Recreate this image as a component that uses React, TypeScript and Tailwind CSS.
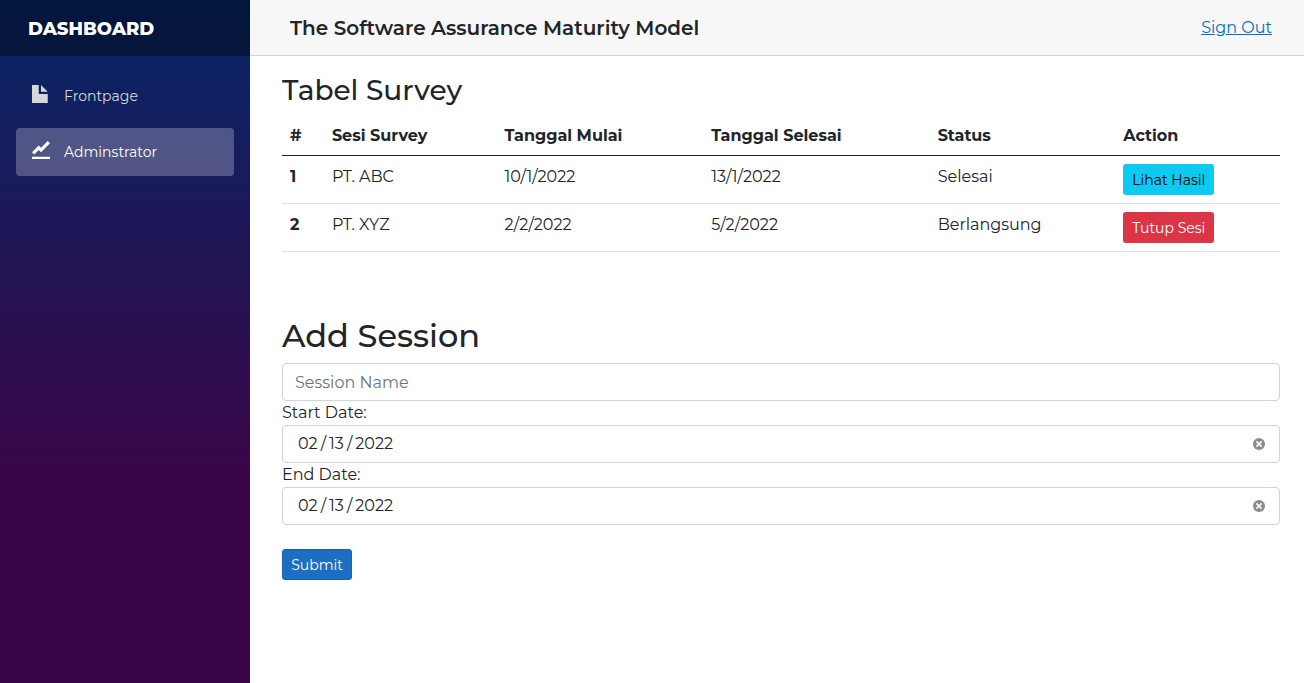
import { useState } from "react";

type Session = {
  id: number;
  name: string;
  start: string;
  end: string;
  status: string;
  action: string;
  tone: string;
};

const sessions: Session[] = [
  { id: 1, name: "PT. ABC", start: "10/1/2022", end: "13/1/2022", status: "Selesai", action: "Lihat Hasil", tone: "bg-[#0dcaf0] text-black" },
  { id: 2, name: "PT. XYZ", start: "2/2/2022", end: "5/2/2022", status: "Berlangsung", action: "Tutup Sesi", tone: "bg-[#dc3545] text-white" },
];

const columns = [
  { label: "#", width: "w-[4.2%]" },
  { label: "Sesi Survey", width: "w-[17.3%]" },
  { label: "Tanggal Mulai", width: "w-[20.7%]" },
  { label: "Tanggal Selesai", width: "w-[22.7%]" },
  { label: "Status", width: "w-[18.6%]" },
  { label: "Action", width: "w-[16.5%]" },
];

const headCell = "border-b border-[#212529] px-2 pt-[9px] pb-[7px] font-bold";
const bodyCell = "border-b border-[#dee2e6] px-2 pt-[9px] pb-[7px]";

const documentPath = "M0 0v8h7v-4h-4v-4h-3zm4 0v3h3l-3-3z";
const graphPath =
  "M7.03 0l-3.03 3-1-1-3 3.03 1 1 2-2.03 1 1 4-4-.97-1zm-7.03 7v1h8v-1h-8z";

function NavItem({ label, path, active }: { label: string; path: string; active?: boolean }) {
  return (
    <li>
      <a
        href="#"
        aria-current={active ? "page" : undefined}
        className={
          active
            ? "flex h-12 items-center gap-[14px] rounded bg-white/25 px-4 text-sm text-white"
            : "flex h-12 items-center gap-[14px] rounded px-4 text-sm text-[#d7d7d7]"
        }
      >
        <svg viewBox="0 0 8 8" className="mb-1 size-[18px]" fill="currentColor" aria-hidden="true">
          <path d={path} />
        </svg>
        {label}
      </a>
    </li>
  );
}

function DateField({ id, label }: { id: string; label: string }) {
  const [value, setValue] = useState("2022-02-13");
  return (
    <div>
      <label htmlFor={id} className="block leading-6">
        {label}
      </label>
      <div className="flex h-[38px] items-center rounded border border-[#ced4da] bg-white px-[14px]">
        <input
          id={id}
          type="date"
          value={value}
          onChange={(e) => setValue(e.target.value)}
          className="min-w-0 flex-1 bg-transparent outline-none [&::-webkit-calendar-picker-indicator]:hidden [&::-webkit-datetime-edit-text]:px-[2px]"
        />
        <button type="button" aria-label={`Clear ${label}`} onClick={() => setValue("")}>
          <svg viewBox="0 0 12 12" className="size-3" aria-hidden="true">
            <circle cx="6" cy="6" r="6" fill="#8c8c8c" />
            <path d="M3.4 3.4l5.2 5.2M8.6 3.4l-5.2 5.2" stroke="#fff" strokeWidth="1.5" />
          </svg>
        </button>
      </div>
    </div>
  );
}

export default function App() {
  return (
    <div className="flex min-h-screen bg-white font-[Montserrat,Inter,sans-serif] text-base text-[#212529]">
      <aside className="w-[250px] shrink-0 bg-[linear-gradient(180deg,rgb(5,39,103)_0%,#3a0647_70%)]">
        <div className="flex h-14 items-center bg-black/40 px-7 pt-[2px]">
          <a href="#" className="text-lg font-extrabold text-white">
            DASHBOARD
          </a>
        </div>
        <nav className="px-4 pt-4">
          <ul className="flex flex-col gap-2">
            <NavItem label="Frontpage" path={documentPath} />
            <NavItem label="Adminstrator" path={graphPath} active />
          </ul>
        </nav>
      </aside>

      <main className="min-w-0 flex-1">
        <header className="flex h-14 items-center justify-between border-b border-[#d6d5d5] bg-[#f7f7f7] pr-8 pl-10">
          <h1 className="text-xl font-semibold">The Software Assurance Maturity Model</h1>
          <a href="#" className="text-[#0071c1] underline">
            Sign Out
          </a>
        </header>

        <div className="pt-[17px] pr-6 pl-8">
          <h2 className="mb-2 text-[28px] leading-[34px] font-medium">Tabel Survey</h2>
          <table className="w-full table-fixed border-separate border-spacing-0 text-left">
            <thead>
              <tr>
                {columns.map((c) => (
                  <th key={c.label} scope="col" className={`${c.width} ${headCell}`}>
                    {c.label}
                  </th>
                ))}
              </tr>
            </thead>
            <tbody className="align-top">
              {sessions.map((s) => (
                <tr key={s.id}>
                  <th scope="row" className={`${bodyCell} font-bold`}>
                    {s.id}
                  </th>
                  <td className={bodyCell}>{s.name}</td>
                  <td className={bodyCell}>{s.start}</td>
                  <td className={bodyCell}>{s.end}</td>
                  <td className={bodyCell}>{s.status}</td>
                  <td className="border-b border-[#dee2e6] p-2">
                    <button type="button" className={`block h-[31px] w-[91px] rounded-[3px] text-sm ${s.tone}`}>
                      {s.action}
                    </button>
                  </td>
                </tr>
              ))}
            </tbody>
          </table>

          <form className="mt-16" onSubmit={(e) => e.preventDefault()}>
            <h2 className="mb-2 text-[32px] leading-[39px] font-medium">Add Session</h2>
            <input
              type="text"
              aria-label="Session Name"
              placeholder="Session Name"
              className="block h-[38px] w-full rounded border border-[#ced4da] bg-white px-3 outline-none placeholder:text-[#6c757d]"
            />
            <DateField id="start-date" label="Start Date:" />
            <DateField id="end-date" label="End Date:" />
            <button
              type="submit"
              className="mt-6 block h-[31px] w-[70px] rounded-[3px] border border-[#1861ac] bg-[#1b6ec2] text-sm text-white"
            >
              Submit
            </button>
          </form>
        </div>
      </main>
    </div>
  );
}
